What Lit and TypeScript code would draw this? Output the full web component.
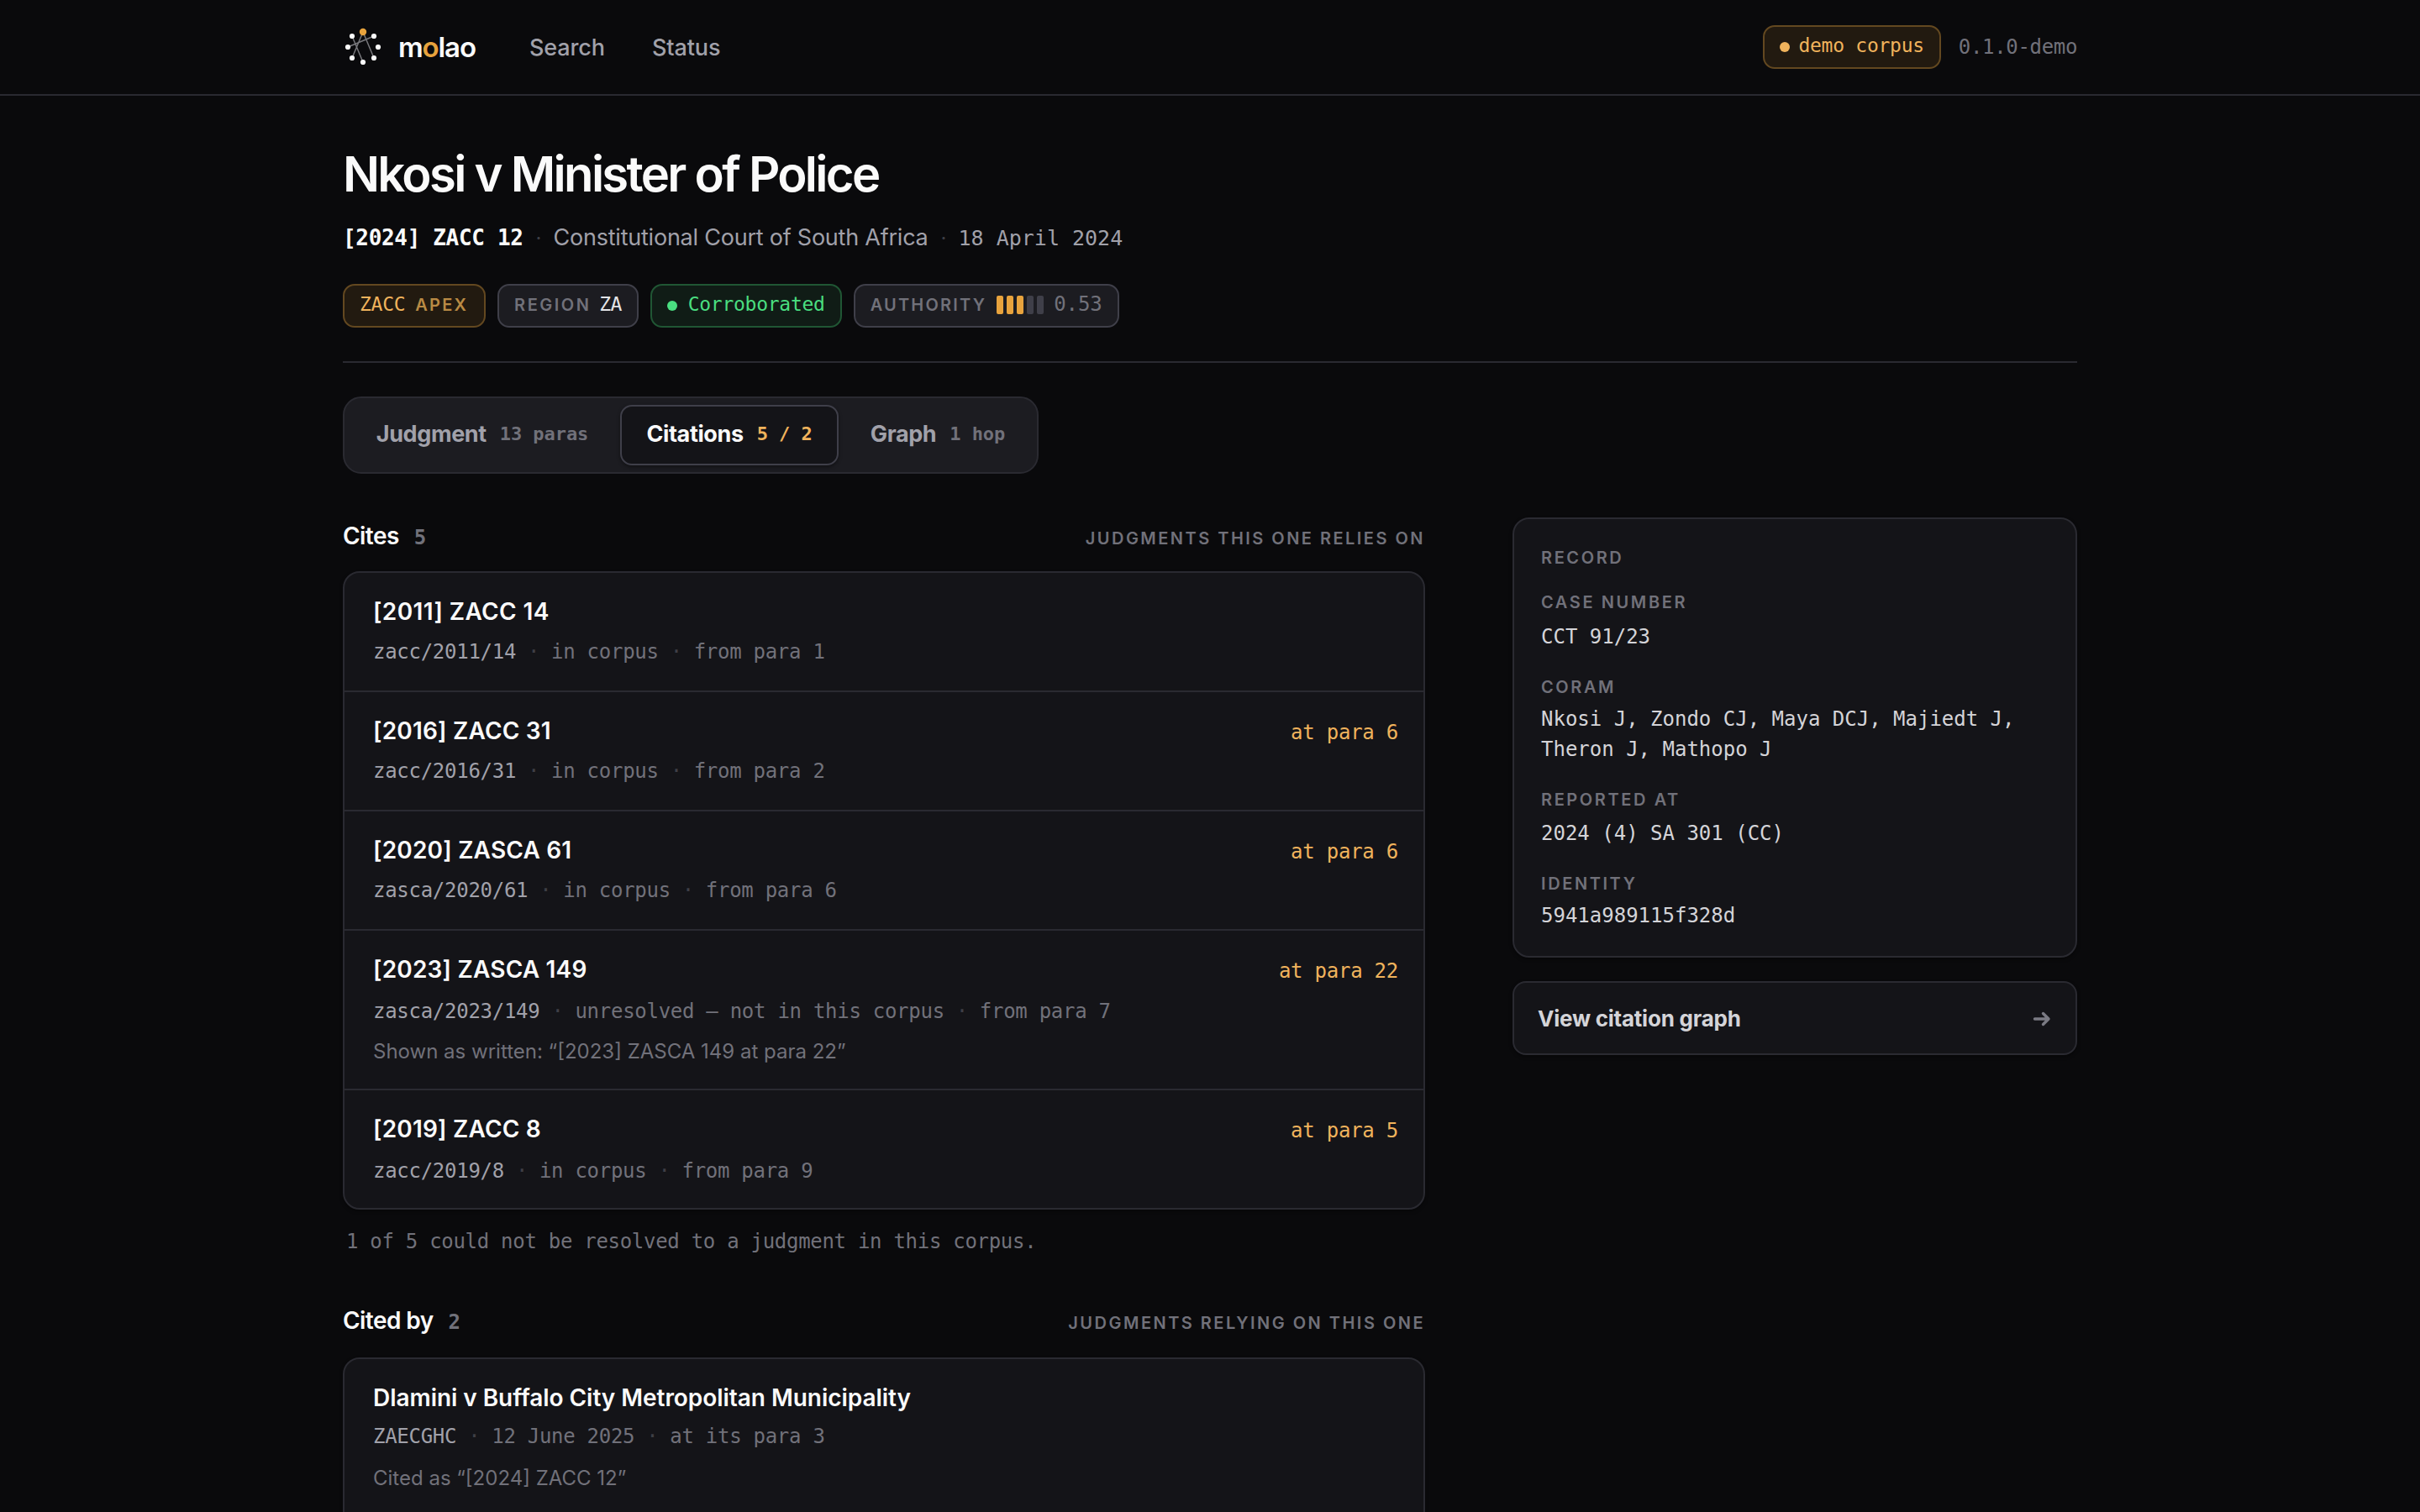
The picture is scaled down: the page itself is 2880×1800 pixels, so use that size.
import { LitElement, html, css, svg, nothing } from "lit";
import { customElement } from "lit/decorators.js";
import { classMap } from "lit/directives/class-map.js";

interface Entry {
  title: string;
  meta: string[];
  pin?: string;
  note?: string;
  spacing?: "loose" | "tight";
  tracking?: "wide" | "plain";
}

const CITES: Entry[] = [
  { title: "[2011] ZACC 14", meta: ["zacc/2011/14", "in corpus", "from para 1"], tracking: "wide" },
  { title: "[2016] ZACC 31", meta: ["zacc/2016/31", "in corpus", "from para 2"], pin: "at para 6" },
  { title: "[2020] ZASCA 61", meta: ["zasca/2020/61", "in corpus", "from para 6"], pin: "at para 6" },
  {
    title: "[2023] ZASCA 149",
    meta: ["zasca/2023/149", "unresolved — not in this corpus", "from para 7"],
    pin: "at para 22",
    note: "Shown as written: “[2023] ZASCA 149 at para 22”",
    spacing: "loose",
  },
  { title: "[2019] ZACC 8", meta: ["zacc/2019/8", "in corpus", "from para 9"], pin: "at para 5", spacing: "loose" },
];

const CITED_BY: Entry[] = [
  {
    title: "Dlamini v Buffalo City Metropolitan Municipality",
    meta: ["ZAECGHC", "12 June 2025", "at its para 3"],
    note: "Cited as “[2024] ZACC 12”",
    spacing: "tight",
    tracking: "plain",
  },
];

const RECORD = [
  { label: "Case number", value: "CCT 91/23" },
  { label: "Coram", value: "Nkosi J, Zondo CJ, Maya DCJ, Majiedt J, Theron J, Mathopo J", close: true },
  { label: "Reported at", value: "2024 (4) SA 301 (CC)" },
  { label: "Identity", value: "5941a989115f328d", close: true },
];

const NODES = [
  [11, 11], [37, 11], [6, 24], [42, 24], [11, 37], [37, 37], [24, 42],
];

@customElement("app-root")
export class AppRoot extends LitElement {
  static styles = css`
    :host {
      --bg: #0a0a0c;
      --surface: #141418;
      --raised: #1c1c21;
      --line: #2a2a31;
      --line-strong: #3f3f49;
      --text: #fafafa;
      --soft: #d4d4d8;
      --muted: #a1a1aa;
      --faint: #71717a;
      --ghost: #3f3f46;
      --amber: #e8a33d;
      --amber-soft: #f0b35c;
      --green: #4ade80;
      --mono: "DejaVu Sans Mono", "Liberation Mono", monospace;
      display: block;
      height: 1800px;
      overflow: hidden;
      background: var(--bg);
      color: var(--text);
      font-family: Inter, "Liberation Sans", sans-serif;
    }
    * { box-sizing: border-box; margin: 0; }
    .wrap { width: 2064px; margin: 0 auto; }
    .mono { font-family: var(--mono); font-size: 24px; letter-spacing: -0.01em; }
    header { border-bottom: 2px solid var(--line); }
    .bar { display: flex; align-items: center; height: 112px; }
    .logo { width: 48px; height: 48px; margin-right: 18px; }
    .brand { font-size: 33px; font-weight: 600; letter-spacing: -0.034em; line-height: 40px; }
    .brand .o { color: var(--amber); }
    nav { display: flex; gap: 56px; margin-left: 64px; padding-top: 1px; font-size: 27px; font-weight: 500; letter-spacing: -0.004em; line-height: 36px; color: var(--muted); }
    .right { margin-left: auto; display: flex; align-items: center; gap: 21px; }
    .version { color: var(--faint); line-height: 36px; letter-spacing: -0.014em; }
    .chip {
      display: flex; align-items: center; height: 52px; padding: 0 18px;
      border: 2px solid var(--line-strong); border-radius: 14px; background: var(--raised);
      font-family: var(--mono); font-size: 23px; letter-spacing: -0.0115em; line-height: 36px; white-space: pre;
    }
    .chip .t { padding-bottom: 4px; }
    .amber { color: var(--amber-soft); border-color: #634820; background: #221a10; }
    .green { color: var(--green); border-color: #205634; background: #101c16; }
    .dot { width: 12px; height: 12px; border-radius: 50%; background: currentColor; margin-right: 10.5px; }
    .green .dot { margin-right: 13px; }
    .tag { font-family: Inter, "Liberation Sans", sans-serif; font-size: 20px; font-weight: 600; letter-spacing: 0.11em; text-transform: uppercase; color: var(--faint); padding-bottom: 3px; }
    .chip .apex { color: #b98a44; margin-left: 12px; padding-right: 1px; }
    .region { letter-spacing: 0.125em; margin-right: 10px; }
    .za { color: #e4e4e7; letter-spacing: -0.03em; }
    .authority { margin-right: 12px; }
    .meter { display: flex; gap: 4px; margin-right: 12px; padding-bottom: 2px; }
    .meter i { width: 8px; height: 22px; border-radius: 2px; background: var(--line-strong); }
    .meter .on { background: var(--amber); }
    .score { color: var(--faint); font-size: 24px; letter-spacing: -0.003em; }
    h1 { font-size: 58px; line-height: 68px; font-weight: 600; letter-spacing: -0.0465em; padding-top: 59px; height: 127px; }
    .meta { display: flex; align-items: baseline; height: 40px; line-height: 40px; margin-top: 22px; color: var(--muted); }
    .cite { font-size: 26px; font-weight: 700; letter-spacing: -0.0126em; color: var(--text); }
    .sep { color: var(--ghost); width: 6px; margin: 0 15px; text-align: center; font-size: 24px; }
    .court { font-size: 27px; letter-spacing: -0.0085em; }
    .date { font-size: 25px; letter-spacing: 0; }
    .chips { display: flex; gap: 14px; margin-top: 35px; padding-bottom: 40px; border-bottom: 2px solid var(--line); }
    .tabs { display: flex; gap: 8px; width: 828px; height: 92px; margin-top: 40px; padding: 8px; border: 2px solid var(--line); border-radius: 22px; background: var(--raised); }
    .tab { display: flex; align-items: center; justify-content: center; padding-bottom: 3px; border: 2px solid transparent; border-radius: 14px; line-height: 36px; font-size: 27px; font-weight: 700; letter-spacing: -0.014em; color: var(--muted); }
    .tab .mono { font-size: 22px; font-weight: 700; letter-spacing: -0.003em; color: var(--faint); margin-left: 16px; }
    .tab.a { width: 312px; }
    .tab.b { width: 260px; }
    .tab.c { width: 220px; }
    .tab.active { background: var(--surface); border-color: var(--line-strong); color: var(--text); box-shadow: 0 2px 4px rgba(0, 0, 0, 0.4); }
    .tab.active .mono { color: var(--amber-soft); }
    .cols { display: grid; grid-template-columns: 1288px 672px; gap: 104px; align-items: start; margin-top: 52px; }
    .head { display: flex; align-items: baseline; height: 40px; line-height: 40px; margin-top: 2px; }
    h2 { font-size: 28px; font-weight: 600; letter-spacing: -0.02em; }
    .head .mono { color: var(--faint); margin-left: 18px; font-size: 24px; font-weight: 700; }
    .label { font-size: 20px; font-weight: 600; letter-spacing: 0.124em; text-transform: uppercase; color: var(--faint); }
    .head .label { margin-left: auto; }
    .card { background: var(--surface); border: 2px solid var(--line); border-radius: 20px; box-shadow: 0 2px 4px rgba(0, 0, 0, 0.4); }
    .list { margin-top: 22px; }
    .list.second { margin-top: 24px; }
    .row { padding: 26px 30px 28px 34px; }
    .row + .row { border-top: 2px solid var(--line); }
    .line { display: flex; align-items: baseline; justify-content: space-between; height: 40px; line-height: 40px; }
    .name { font-size: 28px; font-weight: 600; letter-spacing: 0.007em; }
    .wide .name { letter-spacing: 0.0145em; }
    .plain .name { letter-spacing: -0.0017em; }
    .pin { color: var(--amber-soft); }
    .sub { display: flex; line-height: 36px; margin-top: 10px; color: var(--faint); letter-spacing: -0.0115em; }
    .sub .first { color: var(--muted); }
    .sub .sep { width: 14px; margin: 0 14px; }
    .note { font-size: 24px; line-height: 36px; margin-top: 12px; color: var(--faint); }
    .loose { padding-bottom: 26px; }
    .loose .sub { margin-top: 12px; }
    .tight .sub { margin-top: 8px; }
    .tight .note { margin-top: 14px; }
    .loose.noted { padding-bottom: 26px; }
    .tight.noted { padding-bottom: 60px; }
    .summary { line-height: 40px; margin: 18px 0 0 4px; color: var(--faint); letter-spacing: -0.012em; }
    .again { margin-top: 54px; }
    .record { height: 524px; padding: 34px 30px 0 32px; }
    .record .label { line-height: 24px; letter-spacing: 0.13em; }
    .record dl { display: flex; flex-direction: column; gap: 30px; margin-top: 29px; }
    dd { font-family: var(--mono); font-size: 24px; line-height: 36px; color: var(--soft); margin-top: 11px; }
    .record dl > div + div dd { margin-top: 10px; }
    .record dl > .close dd.value { margin-top: 8px; }
    .link { display: flex; align-items: center; justify-content: space-between; height: 88px; margin-top: 28px; padding: 0 29px 0 28px; border-radius: 16px; font-size: 26px; font-weight: 700; letter-spacing: -0.009em; line-height: 36px; color: var(--soft); }
    .link span { padding-top: 2px; }
    .arrow { width: 22px; height: 22px; }
  `;

  private list(entries: Entry[], extra = "") {
    return html`<div class="card list ${extra}">
      ${entries.map(
        (e) => html`<div class=${classMap({
          row: true,
          loose: e.spacing === "loose",
          tight: e.spacing === "tight",
          noted: !!e.note,
          wide: e.tracking === "wide",
          plain: e.tracking === "plain",
        })}>
          <div class="line"><span class="name">${e.title}</span>${e.pin ? html`<span class="mono pin">${e.pin}</span>` : nothing}</div>
          <div class="mono sub">${e.meta.map(
            (m, i) => html`${i ? html`<span class="sep">·</span>` : nothing}<span class=${i ? "" : "first"}>${m}</span>`,
          )}</div>
          ${e.note ? html`<div class="note">${e.note}</div>` : nothing}
        </div>`,
      )}
    </div>`;
  }

  render() {
    return html`
      <header>
        <div class="wrap bar">
          <svg class="logo" viewBox="0 0 48 48">
            <g stroke="#77777b" stroke-width="1.5">
              <path d="M24 6 11 37M24 6 37 37M11 11 24 42M6 24 37 11" />
            </g>
            <g fill="#fafafa">${NODES.map(([x, y]) => svg`<circle cx=${x} cy=${y} r="3.1" />`)}</g>
            <circle cx="24" cy="6" r="4.2" fill="#e8a33d" />
          </svg>
          <span class="brand">m<span class="o">o</span>lao</span>
          <nav><span>Search</span><span>Status</span></nav>
          <div class="right">
            <div class="chip amber"><i class="dot"></i><span class="t">demo corpus</span></div>
            <span class="mono version">0.1.0-demo</span>
          </div>
        </div>
      </header>
      <main class="wrap">
        <h1>Nkosi v Minister of Police</h1>
        <div class="meta">
          <span class="mono cite">[2024] ZACC 12</span><span class="sep">·</span>
          <span class="court">Constitutional Court of South Africa</span><span class="sep">·</span>
          <span class="mono date">18 April 2024</span>
        </div>
        <div class="chips">
          <div class="chip amber"><span class="t">ZACC</span><span class="tag apex">Apex</span></div>
          <div class="chip"><span class="tag region">Region</span><span class="t za">ZA</span></div>
          <div class="chip green"><i class="dot"></i><span class="t">Corroborated</span></div>
          <div class="chip">
            <span class="tag authority">Authority</span><span class="meter">${[1, 1, 1, 0, 0].map(
              (v) => html`<i class=${v ? "on" : ""}></i>`,
            )}</span><span class="t score">0.53</span></div>
        </div>
        <div class="tabs">
          <div class="tab a">Judgment<span class="mono">13 paras</span></div>
          <div class="tab b active">Citations<span class="mono">5 / 2</span></div>
          <div class="tab c">Graph<span class="mono">1 hop</span></div>
        </div>
        <div class="cols">
          <section>
            <div class="head"><h2>Cites</h2><span class="mono">5</span><span class="label">Judgments this one relies on</span></div>
            ${this.list(CITES)}
            <p class="mono summary">1 of 5 could not be resolved to a judgment in this corpus.</p>
            <div class="head again"><h2>Cited by</h2><span class="mono">2</span><span class="label">Judgments relying on this one</span></div>
            ${this.list(CITED_BY, "second")}
          </section>
          <aside>
            <div class="card record">
              <div class="label">Record</div>
              <dl>${RECORD.map(
                (r) => html`<div class=${r.close ? "close" : ""}><dt class="label">${r.label}</dt><dd class="value">${r.value}</dd></div>`,
              )}</dl>
            </div>
            <div class="card link"><span>View citation graph</span>
              <svg class="arrow" viewBox="0 0 22 22" fill="none" stroke="#7a7a83" stroke-width="3.4" stroke-linecap="round" stroke-linejoin="round">
                <path d="M2.5 12H18.5M12.5 5.5 19 12 12.5 18.5" />
              </svg>
            </div>
          </aside>
        </div>
      </main>
    `;
  }
}
